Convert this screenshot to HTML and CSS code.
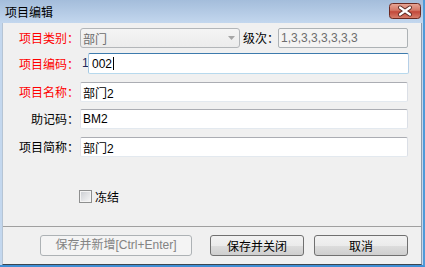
FILE: index.html
```html
<!DOCTYPE html>
<html lang="zh-CN">
<head>
<meta charset="utf-8">
<title>项目编辑</title>
<link rel="stylesheet" href="styles.css">
</head>
<body>
<div class="window">
  <div class="titlebar">
    <span class="title">项目编辑</span>
    <span class="close">
      <svg width="32" height="16" viewBox="0 0 32 16">
        <defs>
          <linearGradient id="cg" x1="0" y1="0" x2="0" y2="1">
            <stop offset="0" stop-color="#e8a898"/>
            <stop offset="0.45" stop-color="#d47867"/>
            <stop offset="0.55" stop-color="#c2483a"/>
            <stop offset="1" stop-color="#d8826f"/>
          </linearGradient>
        </defs>
        <rect x="0.5" y="0.5" width="31" height="15" rx="3" fill="url(#cg)" stroke="#6b2a22"/>
        <path d="M11 4.5 L21 11.5 M21 4.5 L11 11.5" stroke="#5a2a24" stroke-width="4" stroke-linecap="round"/>
        <path d="M11 4.5 L21 11.5 M21 4.5 L11 11.5" stroke="#ffffff" stroke-width="2.2" stroke-linecap="round"/>
      </svg>
    </span>
  </div>
  <div class="client">
    <div class="form">
      <label class="lbl req">项目类别：</label>
      <div class="field">
        <div class="combo">
          <span>部门</span>
          <svg class="arrow" width="7" height="4" viewBox="0 0 7 4"><path d="M0 0 H7 L3.5 4 Z" fill="#a6a6a6"/></svg>
        </div>
        <span class="lbl2">级次：</span>
        <div class="tb disabled">1,3,3,3,3,3,3,3</div>
      </div>

      <label class="lbl req tall">项目编码：</label>
      <div class="field">
        <span class="prefix">1</span>
        <div class="tb focus">002<span class="caret"></span></div>
      </div>

      <label class="lbl req">项目名称：</label>
      <div class="field"><div class="tb">部门2</div></div>

      <label class="lbl">助记码：</label>
      <div class="field"><div class="tb">BM2</div></div>

      <label class="lbl">项目简称：</label>
      <div class="field"><div class="tb">部门2</div></div>
    </div>

    <div class="check-row">
      <span class="checkbox"></span>
      <span class="check-label">冻结</span>
    </div>

    <div class="sep"></div>

    <div class="buttons">
      <button class="btn wide" disabled>保存并新增[Ctrl+Enter]</button>
      <button class="btn">保存并关闭</button>
      <button class="btn">取消</button>
    </div>
  </div>
</div>
</body>
</html>
```

FILE: styles.css
```css
html, body {
  margin: 0;
  padding: 0;
  background: #ffffff;
}

body {
  font-family: "Liberation Sans", "Noto Sans CJK SC", sans-serif;
  font-size: 12px;
  color: #000;
}

.window {
  width: 425px;
  height: 267px;
  box-sizing: border-box;
  display: flex;
  flex-direction: column;
  background: linear-gradient(#a4bddb 0, #c3d7ee 23px, #c3d7ee 100%);
  border-right: 2px solid #4f9ad8;
  border-bottom: 2px solid #3f8fd6;
}

.titlebar {
  height: 23px;
  flex: none;
  display: flex;
  justify-content: space-between;
  align-items: flex-start;
  padding-left: 5px;
}

.title {
  font-family: "Noto Sans CJK SC", sans-serif;
  font-size: 12px;
  line-height: 23px;
  color: #000;
}

.close {
  display: block;
  width: 32px;
  height: 16px;
  margin-top: 3px;
  margin-right: 2px;
}

.close svg {
  display: block;
}

.client {
  flex: 1;
  margin: 0 1px 0 2px;
  background: #f0f0f0;
  border-left: 1px solid #b5c4d4;
  border-right: 1px solid #8d9cae;
  border-bottom: 1px solid #3a4550;
  display: flex;
  flex-direction: column;
}

.form {
  display: grid;
  grid-template-columns: 76px 328px;
  grid-template-rows: 25px 29px 27px 28px 20px;
  column-gap: 1px;
  padding-top: 5px;
}

.lbl {
  text-align: right;
  line-height: 20px;
  height: 20px;
  font-family: "Noto Sans CJK SC", sans-serif;
  white-space: nowrap;
}

.lbl.tall {
  line-height: 21px;
}

.req {
  color: #ff0000;
}

.field {
  display: flex;
  align-items: flex-start;
  height: 20px;
}

.combo {
  width: 160px;
  height: 20px;
  box-sizing: border-box;
  border: 1px solid #b3b6b9;
  border-radius: 3px;
  background: linear-gradient(#f4f4f4, #ececec);
  display: flex;
  align-items: center;
  justify-content: space-between;
  padding: 0 4px 0 2px;
  color: #6d6d6d;
  font-family: "Noto Sans CJK SC", sans-serif;
}

.arrow {
  display: block;
}

.lbl2 {
  margin-left: 3px;
  width: 35px;
  line-height: 20px;
  font-family: "Noto Sans CJK SC", sans-serif;
  white-space: nowrap;
}

.tb {
  flex: 1;
  height: 20px;
  box-sizing: border-box;
  border: 1px solid;
  border-color: #abadb3 #dbdfe6 #e3e9ef #e2e3ea;
  border-radius: 2px;
  background: #ffffff;
  display: flex;
  align-items: center;
  padding: 0 2px;
  white-space: nowrap;
}

.tb.disabled {
  background: #f4f4f4;
  border-color: #adb2b5;
  color: #6d6d6d;
  padding-left: 2px;
}

.tb.focus {
  height: 21px;
  border-color: #3d7bad #b5cfe7 #b7d9ed #a4c9e3;
  padding-left: 3px;
  margin-right: -1px;
}

.prefix {
  width: 8px;
  padding-left: 2px;
  box-sizing: border-box;
  line-height: 21px;
  color: #1c2a5c;
}

.caret {
  display: inline-block;
  width: 1px;
  height: 13px;
  background: #000;
  margin-left: 1px;
}

.check-row {
  display: flex;
  align-items: center;
  margin-top: 33px;
  margin-left: 76px;
  height: 13px;
}

.checkbox {
  width: 13px;
  height: 13px;
  box-sizing: border-box;
  border: 1px solid #8e8f8f;
  background: linear-gradient(135deg, #c9ccd1 0%, #e4e5e7 55%, #f8f8f8 100%);
  box-shadow: inset 0 0 0 1px #f4f4f4;
}

.check-label {
  margin-left: 3px;
  font-family: "Noto Sans CJK SC", sans-serif;
  line-height: 13px;
}

.sep {
  height: 1px;
  margin-top: 23px;
  background: #a0a0a0;
}

.buttons {
  display: flex;
  justify-content: flex-end;
  gap: 10px;
  margin-top: 8px;
  padding-right: 13px;
}

.btn {
  width: 94px;
  height: 21px;
  box-sizing: border-box;
  border: 1px solid #707070;
  border-radius: 3px;
  background: linear-gradient(#f2f2f2 0%, #ebebeb 50%, #dddddd 50%, #cfcfcf 100%);
  font-family: "Noto Sans CJK SC", sans-serif;
  font-size: 12px;
  color: #000;
  padding: 0;
  line-height: 19px;
}

.btn.wide {
  width: 152px;
  margin-right: 8px;
  font-family: "Liberation Sans", "Noto Sans CJK SC", sans-serif;
}

.btn:disabled {
  border-color: #adb2b5;
  background: #f4f4f4;
  color: #838383;
}
```
